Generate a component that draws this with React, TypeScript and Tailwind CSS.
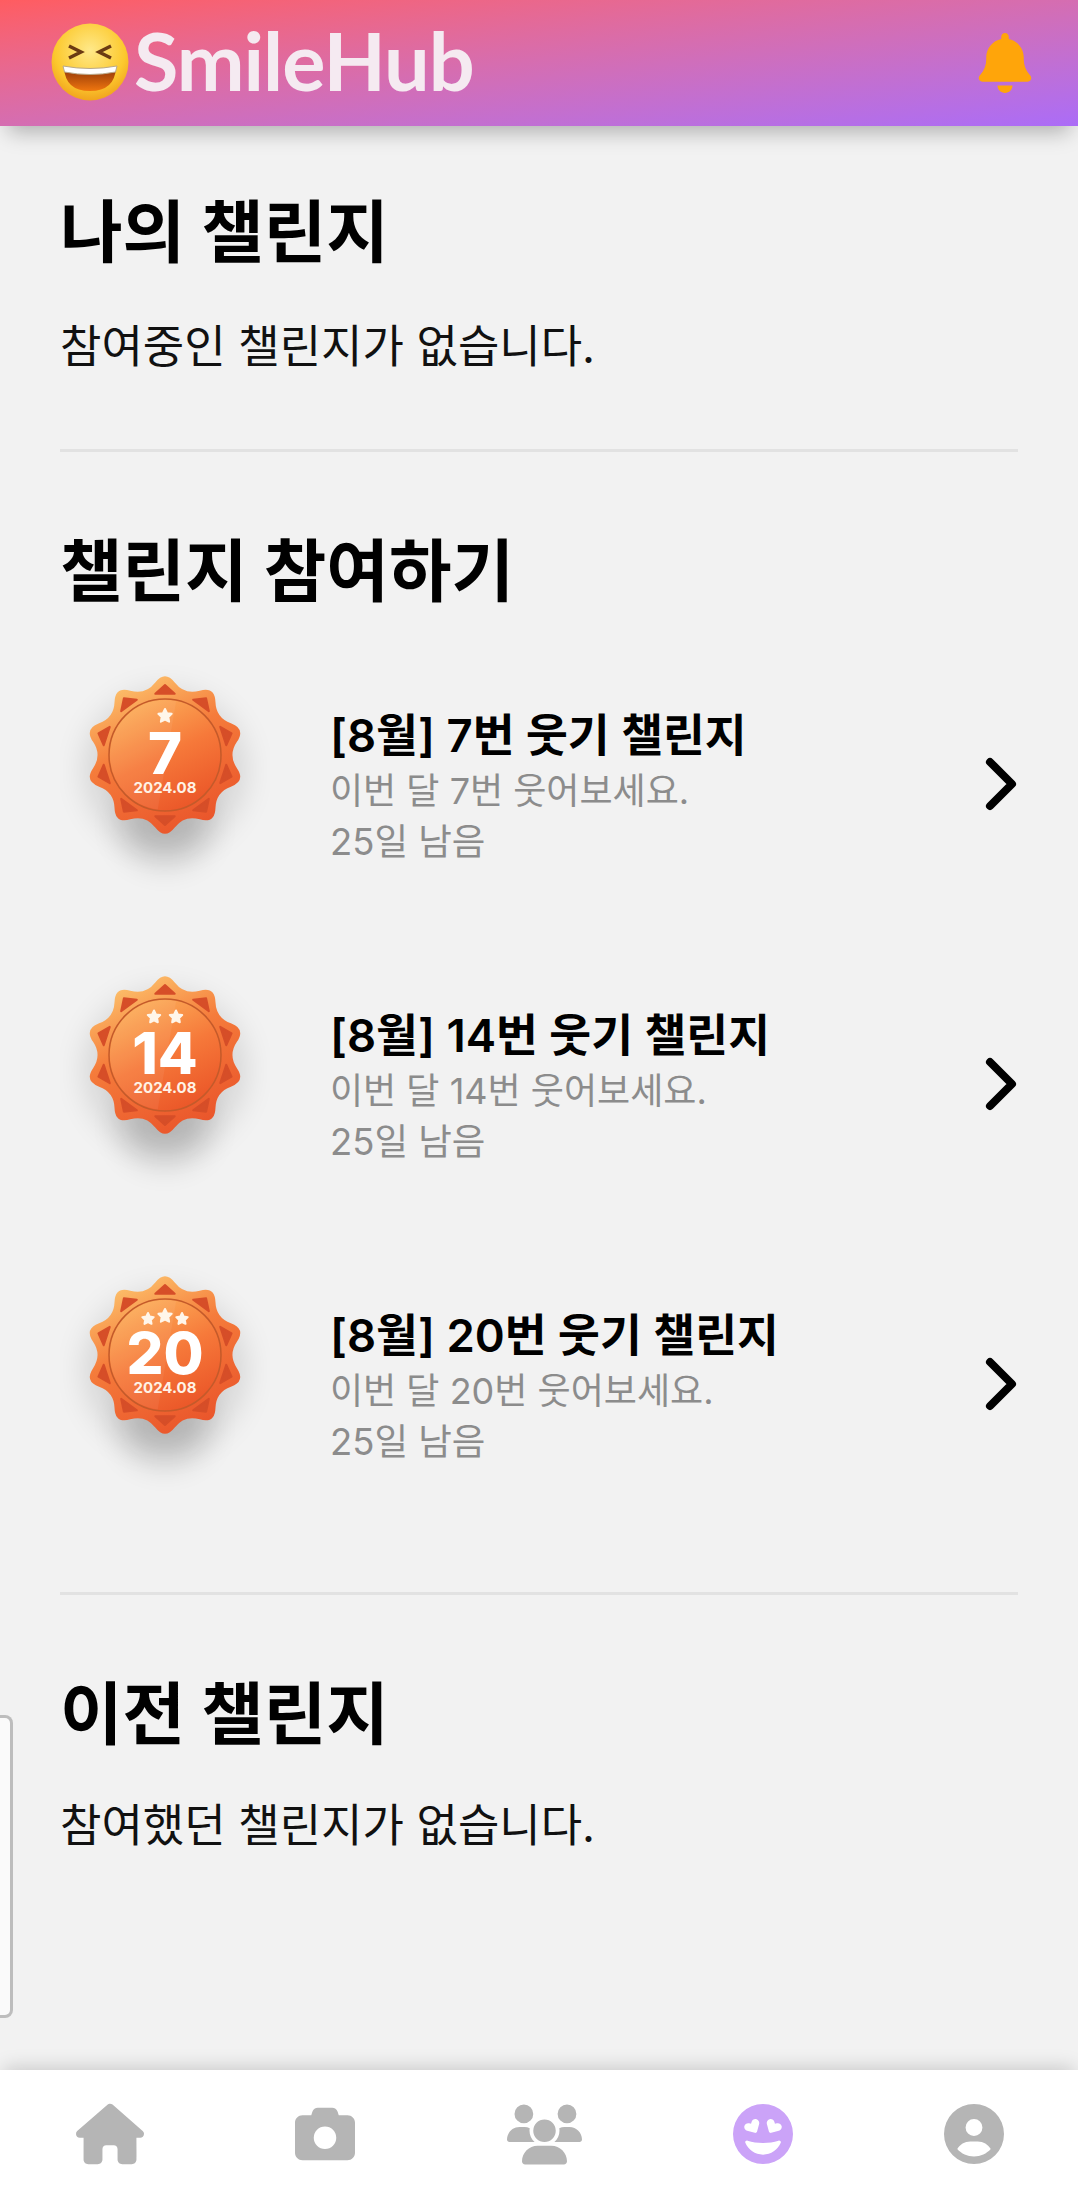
import { FaBell, FaCamera, FaCircleUser, FaFaceGrinHearts, FaHouse, FaUsers } from "react-icons/fa6";

const challenges = [
  { goal: 7, stars: 1 },
  { goal: 14, stars: 2 },
  { goal: 20, stars: 3 },
];

function polar(radius: number, deg: number) {
  const rad = ((deg - 90) * Math.PI) / 180;
  return [105 + radius * Math.cos(rad), 95 + radius * Math.sin(rad)];
}

function medalOutline() {
  const pts = Array.from({ length: 20 }, (_, i) => polar(i % 2 === 0 ? 85 : 63, i * 18));
  const mid = (a: number[], b: number[]) => [(a[0] + b[0]) / 2, (a[1] + b[1]) / 2];
  const start = mid(pts[19], pts[0]);
  let d = `M${start[0]} ${start[1]}`;
  pts.forEach((p, i) => {
    const m = mid(p, pts[(i + 1) % 20]);
    d += `Q${p[0]} ${p[1]} ${m[0]} ${m[1]}`;
  });
  return d + "Z";
}

function starPoints(cx: number, cy: number, r: number) {
  return Array.from({ length: 10 }, (_, i) => {
    const radius = i % 2 === 0 ? r : r * 0.5;
    const rad = ((i * 36 - 90) * Math.PI) / 180;
    return `${cx + radius * Math.cos(rad)},${cy + radius * Math.sin(rad)}`;
  }).join(" ");
}

function Medal({ goal, stars }: { goal: number; stars: number }) {
  const id = `m${goal}`;
  const starList = stars === 1 ? [[105, 56, 7]] : stars === 2 ? [[94, 57, 6.5], [116, 57, 6.5]] : [[88, 59, 6], [105, 56, 7], [122, 59, 6]];
  return (
    <svg width="210" height="250" viewBox="0 0 210 250" className="shrink-0">
      <defs>
        <linearGradient id={`${id}o`} x1="0.25" y1="0" x2="0.7" y2="1">
          <stop offset="0" stopColor="#fdc56e" />
          <stop offset="0.42" stopColor="#f57c3b" />
          <stop offset="1" stopColor="#e9532a" />
        </linearGradient>
        <linearGradient id={`${id}i`} x1="0.25" y1="0" x2="0.75" y2="1">
          <stop offset="0" stopColor="#fcb05a" />
          <stop offset="0.5" stopColor="#f6793a" />
          <stop offset="1" stopColor="#ea5427" />
        </linearGradient>
        <filter id={`${id}b`} x="-60%" y="-60%" width="220%" height="220%">
          <feGaussianBlur stdDeviation="16" />
        </filter>
        <clipPath id={`${id}c`}>
          <circle cx="105" cy="95" r="55" />
        </clipPath>
      </defs>
      <ellipse cx="105" cy="166" rx="44" ry="38" fill="#000" opacity="0.16" filter={`url(#${id}b)`} />
      <ellipse cx="105" cy="110" rx="80" ry="78" fill="#000" opacity="0.12" filter={`url(#${id}b)`} />
      <path d={medalOutline()} fill={`url(#${id}o)`} />
      {Array.from({ length: 10 }, (_, i) => {
        const a = polar(70, i * 36);
        const b = polar(62, i * 36 - 9);
        const c = polar(62, i * 36 + 9);
        return (
          <polygon
            key={i}
            points={`${a[0]},${a[1]} ${b[0]},${b[1]} ${c[0]},${c[1]}`}
            fill="#d64e28"
            stroke="#d64e28"
            strokeWidth="2"
            strokeLinejoin="round"
          />
        );
      })}
      <circle cx="105" cy="95" r="56" fill={`url(#${id}i)`} stroke="#c45a2a" strokeWidth="1.5" />
      <polygon points="118,30 96,160 40,160 40,30" fill="#fff" opacity="0.06" clipPath={`url(#${id}c)`} />
      {starList.map(([x, y, r]) => (
        <polygon key={x} points={starPoints(x, y, r)} fill="#fff6ea" stroke="#fff6ea" strokeWidth="2" strokeLinejoin="round" />
      ))}
      <text x="105" y="114" textAnchor="middle" fontSize="58" fill="#fff" className="font-extrabold">
        {goal}
      </text>
      <text x="105" y="133" textAnchor="middle" fontSize="15" fill="#fff3e6" className="font-bold">
        2024.08
      </text>
    </svg>
  );
}

function LaughEmoji() {
  return (
    <svg width="80" height="80" viewBox="0 0 80 80" className="mb-[2px] shrink-0">
      <defs>
        <radialGradient id="face" cx="0.5" cy="0.35" r="0.7">
          <stop offset="0" stopColor="#ffe98a" />
          <stop offset="0.65" stopColor="#fcc92e" />
          <stop offset="1" stopColor="#ee9a1a" />
        </radialGradient>
        <linearGradient id="mouth" x1="0" y1="0" x2="0" y2="1">
          <stop offset="0" stopColor="#8a3208" />
          <stop offset="1" stopColor="#f0760f" />
        </linearGradient>
      </defs>
      <circle cx="40" cy="40" r="38.5" fill="url(#face)" />
      <path d="M19 24 L31 30 L19 36" fill="none" stroke="#6b3a12" strokeWidth="3.5" strokeLinejoin="miter" />
      <path d="M61 24 L49 30 L61 36" fill="none" stroke="#6b3a12" strokeWidth="3.5" strokeLinejoin="miter" />
      <path d="M14 45 Q40 50 66 45 Q65 69 40 69 Q15 69 14 45Z" fill="url(#mouth)" />
      <path d="M13 44 Q40 49 67 44 L65.5 50 Q40 55 14.5 50Z" fill="#fff" stroke="#b9a98a" strokeWidth="1" />
    </svg>
  );
}

function ChallengeRow({ goal, stars }: { goal: number; stars: number }) {
  return (
    <div className="flex h-[300px] items-center">
      <Medal goal={goal} stars={stars} />
      <div className="ml-[60px] flex flex-col pt-[6px]">
        <div className="text-[45.5px] leading-[52px] font-semibold text-black">[8월] {goal}번 웃기 챌린지</div>
        <div className="mt-[5px] text-[36px] leading-[48px] text-[#8c8c8c]">이번 달 {goal}번 웃어보세요.</div>
        <div className="mt-[3px] text-[36.5px] leading-[48px] text-[#8c8c8c]">25일 남음</div>
      </div>
      <svg width="40" height="60" viewBox="0 0 40 60" className="mb-[2px] ml-auto mr-[-3px]">
        <path d="M9 8 L31 30 L9 52" fill="none" stroke="#000" strokeWidth="8" strokeLinecap="round" strokeLinejoin="round" />
      </svg>
    </div>
  );
}

export default function App() {
  return (
    <div
      className="relative flex h-[2202px] w-[1078px] flex-col overflow-hidden bg-[#f2f2f2]"
      style={{ fontFamily: 'Inter, "Noto Sans CJK KR", sans-serif' }}
    >
      <header className="z-10 flex h-[126px] shrink-0 items-center justify-between bg-gradient-to-br from-[#ff5c60] to-[#ab6cf7] pl-[50px] pr-[43px] shadow-[0_14px_20px_-8px_rgba(0,0,0,0.28)]">
        <div className="flex items-center">
          <LaughEmoji />
          <span className="mb-[8px] ml-[4px] text-[81px] leading-none font-bold tracking-[-1px] text-[#f5eaf1] font-['Lato']">SmileHub</span>
        </div>
        <FaBell className="text-[60px] text-[#ffa50a]" />
      </header>

      <main className="flex-1 px-[60px]">
        <h2 className="mt-[74px] text-[68px] leading-[64px] font-bold text-black">나의 챌린지</h2>
        <p className="mt-[61px] text-[45px] leading-[44px] text-[#111]">참여중인 챌린지가 없습니다.</p>
        <hr className="mt-[80px] border-t-[3px] border-[#e2e2e2]" />

        <h2 className="mt-[87px] text-[68px] leading-[64px] font-bold text-black">챌린지 참여하기</h2>
        <div className="mt-[32px]">
          {challenges.map((c) => (
            <ChallengeRow key={c.goal} goal={c.goal} stars={c.stars} />
          ))}
        </div>
        <hr className="mt-[57px] border-t-[3px] border-[#e2e2e2]" />

        <h2 className="mt-[87px] text-[68px] leading-[64px] font-bold text-black">이전 챌린지</h2>
        <p className="mt-[58px] text-[45px] leading-[44px] text-[#111]">참여했던 챌린지가 없습니다.</p>
      </main>

      <nav className="z-10 flex h-[132px] shrink-0 items-center justify-between bg-white pb-[4px] pl-[76px] pr-[74px] text-[#b5b5b5] shadow-[0_-6px_18px_-4px_rgba(0,0,0,0.18)]">
        <FaHouse className="text-[68px]" />
        <FaCamera className="text-[60px]" />
        <FaUsers className="text-[75px]" />
        <FaFaceGrinHearts className="text-[60px] text-[#cba3f8]" />
        <FaCircleUser className="text-[60px]" />
      </nav>

      <div className="absolute left-0 top-[1715px] h-[303px] w-[13px] rounded-r-[8px] border-[3px] border-l-0 border-[#bdbdbd] bg-[#fafafa]" />
    </div>
  );
}
